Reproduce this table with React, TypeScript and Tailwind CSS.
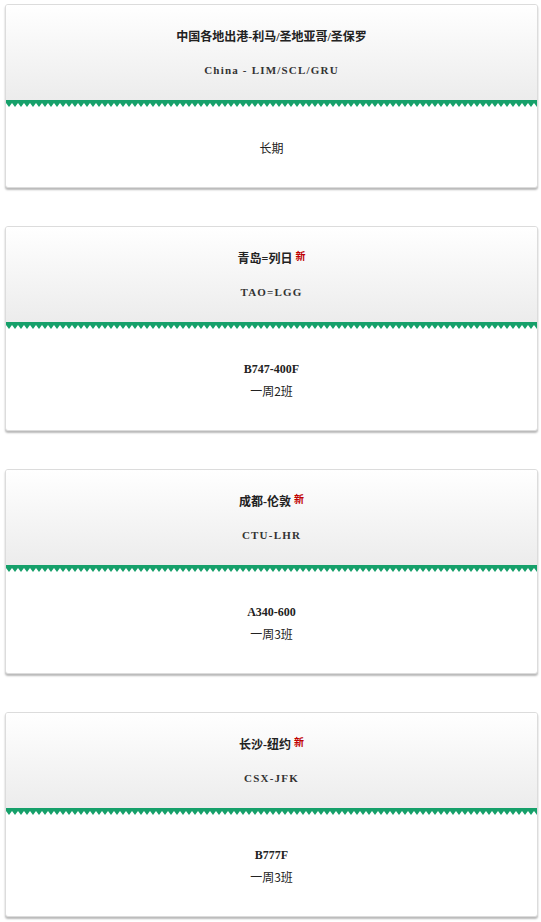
import React from "react";

type Route = {
  cn: string;
  code: string;
  isNew?: boolean;
  lines: { text: string; bold?: boolean }[];
};

const ROUTES: Route[] = [
  {
    cn: "中国各地出港-利马/圣地亚哥/圣保罗",
    code: "China - LIM/SCL/GRU",
    lines: [{ text: "长期" }],
  },
  {
    cn: "青岛=列日",
    code: "TAO=LGG",
    isNew: true,
    lines: [{ text: "B747-400F", bold: true }, { text: "一周2班" }],
  },
  {
    cn: "成都-伦敦",
    code: "CTU-LHR",
    isNew: true,
    lines: [{ text: "A340-600", bold: true }, { text: "一周3班" }],
  },
  {
    cn: "长沙-纽约",
    code: "CSX-JFK",
    isNew: true,
    lines: [{ text: "B777F", bold: true }, { text: "一周3班" }],
  },
];

// 绿色锯齿分隔条
function Zigzag() {
  return (
    <svg className="block w-full h-[7px]" preserveAspectRatio="none">
      <defs>
        <pattern id="teeth" width="6" height="7" patternUnits="userSpaceOnUse">
          <rect x="0" y="0" width="6" height="3" fill="#16a06a" />
          <polygon points="0,3 6,3 3,7" fill="#16a06a" />
        </pattern>
      </defs>
      <rect x="0" y="0" width="100%" height="7" fill="url(#teeth)" />
    </svg>
  );
}

function RouteCard({ r }: { r: Route }) {
  return (
    <div className="rounded-[3px] border border-[#dcdcdc] bg-white shadow-[0_2px_2px_rgba(0,0,0,0.28)] overflow-hidden">
      <div className="bg-gradient-to-b from-white to-[#ececec] pt-[21px] pb-[19px] text-center">
        <div className="h-[22px] leading-[22px] text-[12px] font-bold text-[#222] font-['Liberation_Serif','Noto_Sans_CJK_SC',serif]">
          {r.cn}
          {r.isNew && (
            <span className="inline-block ml-[3px] text-[10px] leading-[10px] text-[#c00000] font-bold relative -top-[3px] font-['Noto_Sans_CJK_SC',sans-serif]">
              新
            </span>
          )}
        </div>
        <div className="mt-[11px] h-[22px] leading-[22px] text-[11px] font-bold tracking-[1.2px] text-[#333] font-['Liberation_Serif',serif]">
          {r.code}
        </div>
      </div>
      <Zigzag />
      <div className="pt-[30px] pb-[29px] text-center">
        {r.lines.map((l, i) => (
          <div
            key={i}
            className={`h-[21px] leading-[21px] text-[12px] text-[#222] ${
              l.bold
                ? "font-bold font-['Liberation_Serif',serif]"
                : "font-['Noto_Sans_CJK_SC','Liberation_Sans',sans-serif]"
            }`}
          >
            {l.text}
          </div>
        ))}
      </div>
    </div>
  );
}

export default function App() {
  return (
    <div className="min-h-screen bg-white pl-[5px] pr-[3px] pt-[4px] flex flex-col gap-[38px]">
      {ROUTES.map((r) => (
        <RouteCard key={r.code} r={r} />
      ))}
    </div>
  );
}
